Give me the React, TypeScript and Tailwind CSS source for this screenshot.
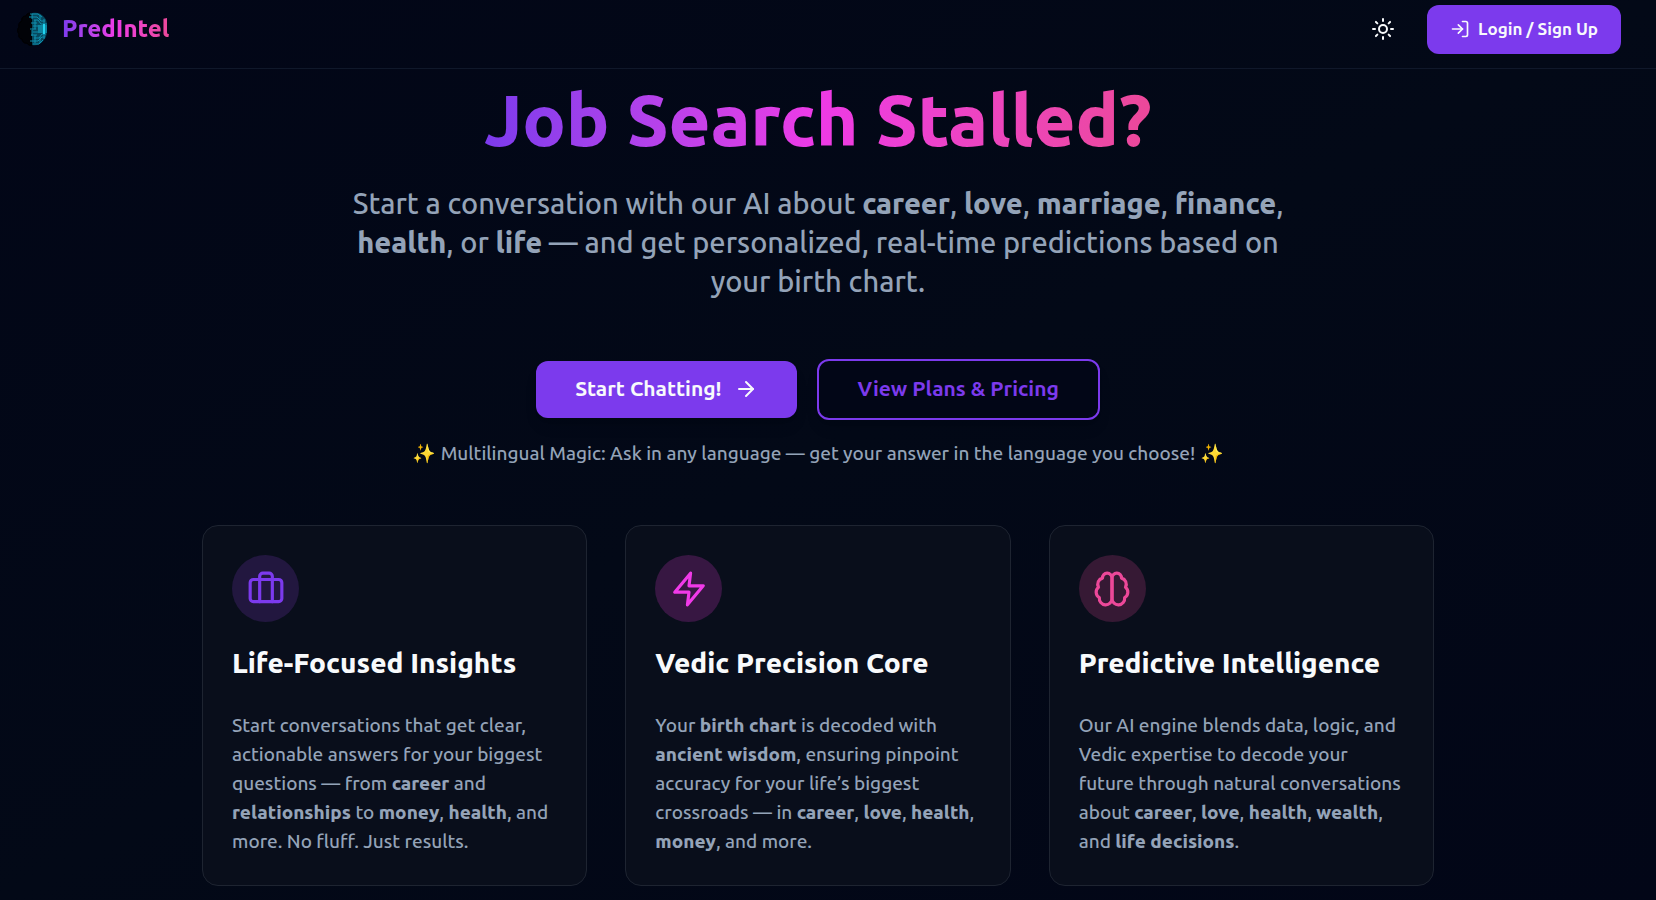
import { ArrowRight, LogIn, Sun } from 'lucide-react';

const features = [
  {
    title: 'Life-Focused Insights',
    circle: 'bg-[#22173f] text-[#7c3aed]',
    // suitcase
    icon: (
      <>
        <rect x="2" y="6" width="20" height="14" rx="2" />
        <path d="M16 20V4a2 2 0 0 0-2-2h-4a2 2 0 0 0-2 2v16" />
      </>
    ),
    text: (
      <>
        Start conversations that get clear, actionable answers for your biggest
        questions — from <strong>career</strong> and{' '}
        <strong>relationships</strong> to <strong>money</strong>,{' '}
        <strong>health</strong>, and more. No fluff. Just results.
      </>
    ),
  },
  {
    title: 'Vedic Precision Core',
    circle: 'bg-[#371742] text-[#f03ae8]',
    // lightning
    icon: <polygon points="13 2 3 14 12 14 11 22 21 10 12 10 13 2" />,
    text: (
      <>
        Your <strong>birth chart</strong> is decoded with{' '}
        <strong>ancient wisdom</strong>, ensuring pinpoint accuracy for your
        life’s biggest crossroads — in <strong>career</strong>,{' '}
        <strong>love</strong>, <strong>health</strong>, <strong>money</strong>,
        and more.
      </>
    ),
  },
  {
    title: 'Predictive Intelligence',
    circle: 'bg-[#361934] text-[#ec4899]',
    // brain
    icon: (
      <>
        <path d="M12 5a3 3 0 1 0-5.997.125 4 4 0 0 0-2.526 5.77 4 4 0 0 0 .556 6.588A4 4 0 1 0 12 18Z" />
        <path d="M12 5a3 3 0 1 1 5.997.125 4 4 0 0 1 2.526 5.77 4 4 0 0 1-.556 6.588A4 4 0 1 1 12 18Z" />
      </>
    ),
    text: (
      <>
        Our AI engine blends data, logic, and Vedic expertise to decode your
        future through natural conversations about <strong>career</strong>,{' '}
        <strong>love</strong>, <strong>health</strong>, <strong>wealth</strong>,
        and <strong>life decisions</strong>.
      </>
    ),
  },
];

function Logo() {
  return (
    <svg viewBox="0 0 34 36" className="h-9 w-[34px]" aria-hidden="true">
      <path
        d="M16 3c-3-2-6 0-6 2-3 0-5 2-4 5-3 1-4 4-3 6-2 2-2 5 0 7-1 3 1 5 3 5 0 3 3 5 5 4 1 2 3 3 5 2z"
        fill="#010207"
        stroke="#000"
      />
      <path d="M16 2c5-1 9 0 12 4 3 3 3 6 3 12s-1 9-4 12c-3 4-7 5-11 4z" fill="#07495f" />
      <g fill="none" stroke="#0e8fae" strokeWidth="1">
        <path d="M14 3h8l4 3M13 6h8l4 4h4M18 9h4l3 4h6M15 12h6M17 15h5M14 18h6M17 21h5M15 24h6M18 27h5l3-4h4M14 30h8l4-4h3M17 33h6l4-4" />
        <path d="M16 3v5M24 4v5M19 9v9M16 19v6M19 24v8M24 26v6M28 8v6M28 23v5" />
      </g>
      <path d="M22 15h9M22 17h9M22 19h9M22 21h9" stroke="#16bfe0" strokeWidth="1" />
      <path d="M28 13v10" stroke="#22d3ee" strokeWidth="2" />
    </svg>
  );
}

export default function App() {
  return (
    <div className="min-h-screen bg-linear-to-br from-[#020617] via-[#030917] to-[#020617] font-['Ubuntu','Noto_Sans',sans-serif] font-medium text-[#f8fafc] [&_strong]:font-extrabold">
      <header className="flex h-[69px] items-center justify-between border-b border-[#10182a] pr-[35px] pb-[10px] pl-4">
        <a href="#home" className="flex items-center gap-3">
          <Logo />
          <span className="bg-linear-to-r from-[#7c3aed] via-[#ee3ae6] to-[#ec4899] bg-clip-text text-2xl font-extrabold text-transparent">
            PredIntel
          </span>
        </a>
        <div className="flex items-center gap-5">
          <button
            aria-label="Toggle theme"
            className="flex h-12 w-12 items-center justify-center rounded-xl"
          >
            <Sun className="h-6 w-6" />
          </button>
          <button className="flex h-[49px] items-center gap-2 rounded-xl bg-[#7c3aed] px-[23px] text-[17px] font-bold">
            <LogIn className="h-5 w-5" />
            Login / Sign Up
          </button>
        </div>
      </header>

      <main className="pr-5 pb-3">
        <section className="flex flex-col items-center pt-[15px] text-center">
          <h1 className="bg-linear-to-r from-[#7c3aed] via-[#ee3ae6] to-[#ec4899] bg-clip-text text-[72px] leading-[72px] font-extrabold text-transparent">
            Job Search Stalled?
          </h1>
          <p className="mt-7 max-w-[960px] text-[29px] leading-[39px] text-[#94a3b8]">
            Start a conversation with our AI about <strong>career</strong>,{' '}
            <strong>love</strong>, <strong>marriage</strong>,{' '}
            <strong>finance</strong>, <strong>health</strong>, or{' '}
            <strong>life</strong> — and get personalized, real-time predictions
            based on your birth chart.
          </p>
          <div className="mt-[58px] flex items-center gap-5">
            <button className="flex h-[57px] items-center gap-3 rounded-xl bg-[#7c3aed] px-[39px] pb-[2px] text-[21px] font-bold shadow-lg">
              Start Chatting!
              <ArrowRight className="h-6 w-6" />
            </button>
            <button className="h-[61px] rounded-xl border-2 border-[#7c3aed] bg-[#020617] px-[39px] pb-[2px] text-[21px] font-bold text-[#7c3aed] shadow-lg">
              View Plans &amp; Pricing
            </button>
          </div>
          <p className="mt-[19px] text-[19px] leading-7 text-[#94a3b8]">
            ✨ Multilingual Magic: Ask in any language — get your answer in the
            language you choose! ✨
          </p>
        </section>

        <section className="mx-auto mt-[58px] grid max-w-[1232px] grid-cols-3 gap-[38px]">
          {features.map((feature) => (
            <article
              key={feature.title}
              className="rounded-2xl border border-[#1e2431] bg-[#090e1b] p-[29px]"
            >
              <div
                className={`flex h-[67px] w-[67px] items-center justify-center rounded-full ${feature.circle}`}
              >
                <svg
                  viewBox="0 0 24 24"
                  className="h-[38px] w-[38px]"
                  fill="none"
                  stroke="currentColor"
                  strokeWidth="2"
                  strokeLinecap="round"
                  strokeLinejoin="round"
                  aria-hidden="true"
                >
                  {feature.icon}
                </svg>
              </div>
              <h2 className="mt-[23px] text-[28px] leading-9 font-extrabold">
                {feature.title}
              </h2>
              <p className="mt-[30px] text-[19px] leading-[29px] text-[#94a3b8]">
                {feature.text}
              </p>
            </article>
          ))}
        </section>
      </main>
    </div>
  );
}
